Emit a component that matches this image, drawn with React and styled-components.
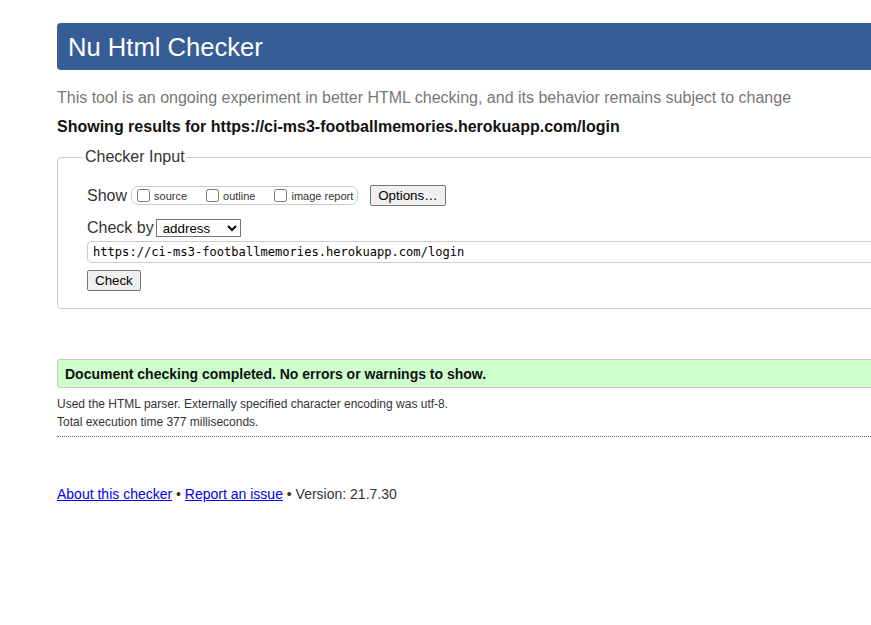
import React from "react";
import styled, { createGlobalStyle } from "styled-components";

const Global = createGlobalStyle`
  html, body { margin: 0; padding: 0; overflow: hidden; background: #fff; }
  body { font-family: "Liberation Sans", Arial, sans-serif; color: #222; }
`;

const Page = styled.div`
  width: 1000px;
  padding: 23px 0 0 57px;
`;

const Header = styled.header`
  height: 47px;
  background: #365d95;
  border-radius: 4px;
  display: flex;
  align-items: center;
  padding-left: 11px;
`;

const Title = styled.h1`
  margin: 0;
  font-size: 25.6px;
  font-weight: normal;
  color: #fff;
  line-height: 30px;
`;

const Intro = styled.p`
  margin: 19px 0 0;
  font-size: 16px;
  line-height: 18px;
  color: #777;
`;

const Results = styled.h2`
  margin: 11px 0 0;
  font-size: 16px;
  line-height: 18px;
  font-weight: bold;
  color: #111;
`;

const Fieldset = styled.fieldset`
  margin: 12px 0 0;
  padding: 19px 0 17px 29px;
  border: 1px solid #ccc;
  border-radius: 4px;
  min-width: 0;
`;

const Legend = styled.legend`
  margin-left: -4px;
  padding: 0 1px 0 2px;
  font-size: 16px;
  line-height: 18px;
  color: #333;
`;

const Row = styled.div`
  display: flex;
  align-items: center;
  height: ${(p) => p.$h}px;
  margin-top: ${(p) => p.$mt || 0}px;
`;

const Label = styled.span`
  font-size: 16px;
  line-height: 18px;
  color: #333;
  margin-right: ${(p) => p.$mr || 0}px;
`;

const CheckGroup = styled.span`
  display: inline-flex;
  align-items: center;
  height: 17px;
  border: 1px solid #ccc;
  border-radius: 7px;
  padding: 0 4px 0 5px;
  gap: 19px;
`;

const CheckItem = styled.label`
  display: inline-flex;
  align-items: center;
  gap: 4px;
  font-size: 11px;
  color: #333;
  & input {
    margin: 0;
    width: 13px;
    height: 13px;
  }
`;

const Button = styled.button`
  font-family: "Liberation Sans", Arial, sans-serif;
  font-size: 13.33px;
  height: ${(p) => p.$h || 21}px;
  padding: 0 7px;
  margin-left: ${(p) => p.$ml || 0}px;
  color: #000;
  background: #efefef;
  border: 1px solid #767676;
  border-radius: 2px;
`;

const Select = styled.select`
  font-family: "Liberation Sans", Arial, sans-serif;
  font-size: 13.33px;
  width: 85px;
  height: 18px;
  margin-left: 2px;
  padding: 0 0 0 2px;
  border: 1px solid #767676;
  border-radius: 0;
  color: #000;
  background: #fff;
`;

const UrlInput = styled.input`
  display: block;
  box-sizing: border-box;
  width: 100%;
  height: 22px;
  margin-top: 3px;
  padding: 0 5px;
  font-family: "DejaVu Sans Mono", monospace;
  font-size: 12.1px;
  color: #000;
  border: 1px solid #ccc;
  border-radius: 5px;
  outline: none;
`;

const Success = styled.div`
  margin-top: 50px;
  height: 27px;
  border: 1px solid #c8c8c8;
  border-radius: 3px;
  background: #ccffcc;
  display: flex;
  align-items: center;
  padding-left: 7px;
  font-size: 14px;
  font-weight: bold;
  color: #111;
`;

const Details = styled.div`
  margin-top: 7px;
  padding-bottom: 5px;
  border-bottom: 1px dotted #666;
`;

const Note = styled.p`
  margin: 0;
  font-size: 12px;
  line-height: 18px;
  color: #333;
`;

const Footer = styled.p`
  margin: 49px 0 0;
  font-size: 14px;
  line-height: 16px;
  color: #333;
  & a { color: #0000ee; text-decoration: underline; }
`;

export default function App() {
  return (
    <>
      <Global />
      <Page>
        <Header>
          <Title>Nu Html Checker</Title>
        </Header>
        <Intro>
          This tool is an ongoing experiment in better HTML checking, and its behavior remains subject to change
        </Intro>
        <Results>Showing results for https://ci-ms3-footballmemories.herokuapp.com/login</Results>
        <Fieldset>
          <Legend>Checker Input</Legend>
          <Row $h={21}>
            <Label $mr={4}>Show</Label>
            <CheckGroup>
              <CheckItem><input type="checkbox" />source</CheckItem>
              <CheckItem><input type="checkbox" />outline</CheckItem>
              <CheckItem><input type="checkbox" />image report</CheckItem>
            </CheckGroup>
            <Button $ml={12}>Options…</Button>
          </Row>
          <Row $h={21} $mt={11}>
            <Label>Check by</Label>
            <Select defaultValue="address">
              <option value="address">address</option>
              <option value="file">file upload</option>
              <option value="text">text input</option>
            </Select>
          </Row>
          <UrlInput defaultValue="https://ci-ms3-footballmemories.herokuapp.com/login" />
          <Row $h={21} $mt={7}>
            <Button>Check</Button>
          </Row>
        </Fieldset>
        <Success>Document checking completed. No errors or warnings to show.</Success>
        <Details>
          <Note>Used the HTML parser. Externally specified character encoding was utf-8.</Note>
          <Note>Total execution time 377 milliseconds.</Note>
        </Details>
        <Footer>
          <a href="#about">About this checker</a> • <a href="#report">Report an issue</a> • Version: 21.7.30
        </Footer>
      </Page>
    </>
  );
}
